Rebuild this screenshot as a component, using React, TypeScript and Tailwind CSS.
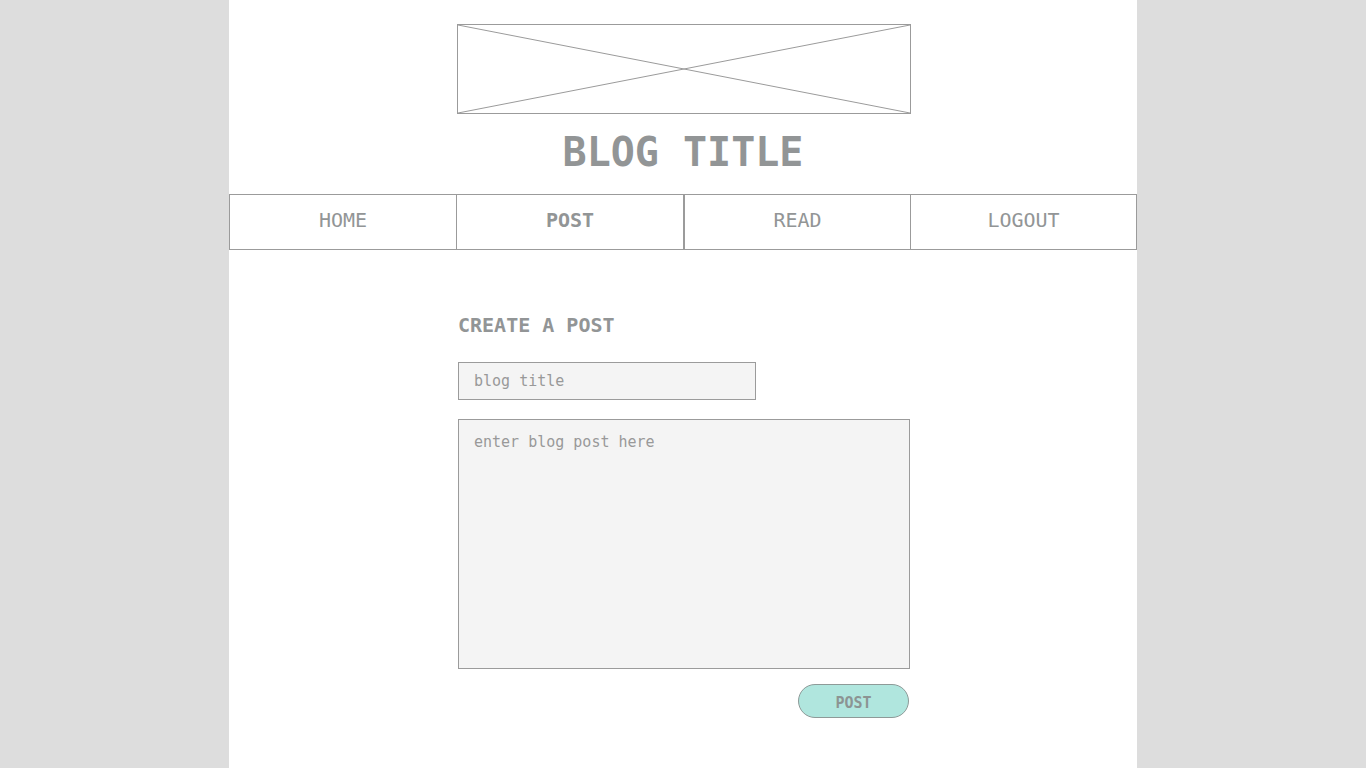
const navItems = [
  { label: "HOME", active: false, cls: "w-[228px]" },
  { label: "POST", active: true, cls: "w-[228px] -ml-px" },
  { label: "READ", active: false, cls: "w-[227px]" },
  { label: "LOGOUT", active: false, cls: "w-[227px] -ml-px" },
];

function ImagePlaceholder() {
  return (
    <div className="relative ml-[228px] h-[90px] w-[454px] self-start border border-[#9b9b9b]">
      <svg
        className="absolute inset-0 h-full w-full"
        viewBox="0 0 452 88"
        preserveAspectRatio="none"
      >
        <line x1="0" y1="0" x2="452" y2="88" stroke="#9b9b9b" strokeWidth="1" />
        <line x1="452" y1="0" x2="0" y2="88" stroke="#9b9b9b" strokeWidth="1" />
      </svg>
    </div>
  );
}

export default function App() {
  return (
    <div
      className="min-h-screen bg-[#dddddd] text-[#929596]"
      style={{ fontFamily: '"DejaVu Sans Mono", "Liberation Mono", monospace' }}
    >
      <div className="mx-auto flex min-h-screen w-[908px] flex-col items-center bg-white pt-6">
        <ImagePlaceholder />

        <h1 className="mt-[18px] text-[40px] font-bold leading-none tracking-normal">
          BLOG TITLE
        </h1>

        <nav className="mt-[22px] flex w-full">
          {navItems.map((item) => (
            <a
              key={item.label}
              href="#"
              className={`flex h-[56px] items-center justify-center border border-[#9b9b9b] pb-[4px] text-[20px] ${
                item.active ? "font-bold" : "font-normal"
              } ${item.cls}`}
            >
              {item.label}
            </a>
          ))}
        </nav>

        <form className="mt-[65px] ml-[229px] flex w-[452px] flex-col self-start">
          <h2 className="text-[20px] font-bold leading-none">CREATE A POST</h2>

          <input
            type="text"
            placeholder="blog title"
            className="mt-[27px] h-[38px] w-[298px] border border-[#9b9b9b] bg-[#f4f4f4] px-[15px] text-[15px] outline-none placeholder:text-[#999999]"
          />

          <textarea
            placeholder="enter blog post here"
            className="mt-[19px] h-[250px] w-full resize-none border border-[#9b9b9b] bg-[#f4f4f4] px-[15px] pt-[11px] text-[15px] outline-none placeholder:text-[#999999]"
          />

          <div className="mt-[15px] flex justify-end">
            <button
              type="button"
              className="mr-px h-[34px] w-[111px] rounded-full border border-[#8e9a98] bg-[#b0e6de] pt-[4px] text-[15px] font-bold text-[#8c9493]"
            >
              POST
            </button>
          </div>
        </form>
      </div>
    </div>
  );
}
